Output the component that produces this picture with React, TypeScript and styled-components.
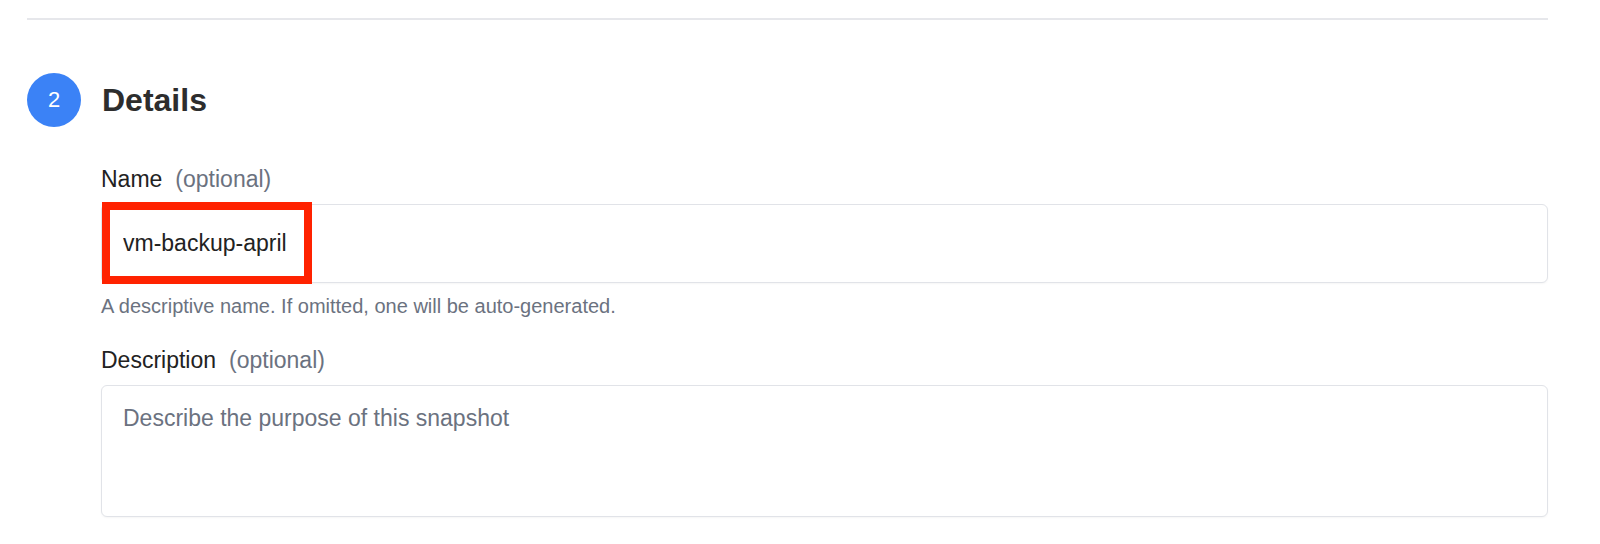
import React from 'react';
import styled, {createGlobalStyle} from 'styled-components';

const GlobalStyle = createGlobalStyle`
	body {
		margin: 0;
		background: #FFF;
		font-family: "Liberation Sans", Arial, sans-serif;
		color: #222;
	}
`;

const Page = styled.div`
	padding: 18px 52px 0 27px;
`;

const Divider = styled.hr`
	margin: 0;
	border: none;
	height: 2px;
	background: #e6e7eb;
`;

const StepHeader = styled.div`
	display: flex;
	align-items: center;
	gap: 21px;
	margin-top: 53px;
`;

const StepBadge = styled.div`
	width: 54px;
	height: 54px;
	border-radius: 50%;
	background: #3b82f6;
	color: #FFF;
	display: flex;
	align-items: center;
	justify-content: center;
	font-size: 22px;
`;

const StepTitle = styled.h2`
	margin: 0;
	font-size: 32px;
	font-weight: 700;
	color: #2d2d2d;
`;

const Fields = styled.div`
	padding-left: 74px;
	margin-top: 38px;
`;

const Field = styled.div`
	margin-bottom: 28px;
`;

const Label = styled.label`
	display: block;
	font-size: 23px;
	line-height: 28px;
	color: #222;
	margin-bottom: 11px;
	> .hint {
		color: #6b7280;
		margin-left: 13px;
	}
`;

const InputWrap = styled.div`
	position: relative;
`;

const TextInput = styled.input`
	box-sizing: border-box;
	display: block;
	width: 100%;
	height: 79px;
	padding: 0 21px;
	border: 1px solid #e1e3e8;
	border-radius: 6px;
	box-shadow: 0 1px 2px rgba(0, 0, 0, 0.04);
	font-family: inherit;
	font-size: 23px;
	color: #222;
	outline: none;
`;

const TextArea = styled.textarea`
	box-sizing: border-box;
	display: block;
	width: 100%;
	height: 132px;
	padding: 18px 21px;
	border: 1px solid #e1e3e8;
	border-radius: 6px;
	box-shadow: 0 1px 2px rgba(0, 0, 0, 0.04);
	font-family: inherit;
	font-size: 23px;
	line-height: 28px;
	color: #222;
	resize: none;
	outline: none;
	&::placeholder {
		color: #6b7280;
	}
`;

// red annotation frame drawn over the start of the name field
const Highlight = styled.div`
	position: absolute;
	left: 1px;
	top: -2px;
	width: 210px;
	height: 82px;
	box-sizing: border-box;
	border: 8px solid #ff2200;
	pointer-events: none;
`;

const Help = styled.p`
	margin: 11px 0 0;
	font-size: 20px;
	line-height: 24px;
	color: #6b7280;
`;

export default function App() {
	return (
		<>
			<GlobalStyle/>
			<Page>
				<Divider/>
				<StepHeader>
					<StepBadge>2</StepBadge>
					<StepTitle>Details</StepTitle>
				</StepHeader>
				<Fields>
					<Field>
						<Label>Name<span className="hint">(optional)</span></Label>
						<InputWrap>
							<TextInput defaultValue="vm-backup-april"/>
							<Highlight/>
						</InputWrap>
						<Help>A descriptive name. If omitted, one will be auto-generated.</Help>
					</Field>
					<Field>
						<Label>Description<span className="hint">(optional)</span></Label>
						<TextArea placeholder="Describe the purpose of this snapshot"/>
					</Field>
				</Fields>
			</Page>
		</>
	);
}
